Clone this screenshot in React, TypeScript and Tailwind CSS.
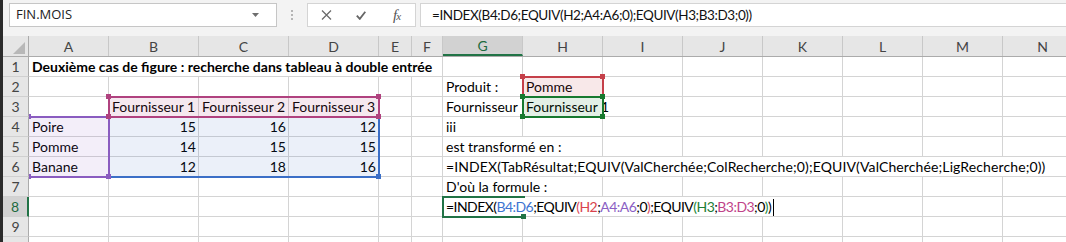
import React from "react";
import clsx from "clsx";

type Cell = { c: number; s?: number; t: React.ReactNode; right?: boolean; bold?: boolean };

const COLS = ["A", "B", "C", "D", "E", "F", "G", "H", "I", "J", "K", "L", "M", "N"];

const SPAN: Record<number, string> = {
  1: "",
  2: "col-span-2",
  5: "col-span-5",
  6: "col-span-6",
  8: "col-span-8",
};

const num = (c: number, t: string): Cell => ({ c, t, right: true });

function Formula() {
  return (
    <span className="tracking-[-0.55px]">
      =INDEX(<span className="text-[#3d74d1]">B4:D6</span>;EQUIV
      <span className="text-[#dc4c5c]">(</span>
      <span className="text-[#d9434d]">H2</span>;<span className="text-[#8b5fc4]">A4:A6</span>;0
      <span className="text-[#dc4c5c]">)</span>;EQUIV
      <span className="text-[#21883b]">(</span>
      <span className="text-[#1e7d34]">H3</span>;<span className="text-[#bf4389]">B3:D3</span>;0
      <span className="text-[#21883b]">)</span>)
      <span className="inline-block w-px h-[17px] bg-black align-[-4px] ml-[2px]" />
    </span>
  );
}

const ROWS: Cell[][] = [
  [{ c: 0, s: 6, t: "Deuxième cas de figure : recherche dans tableau à double entrée", bold: true }],
  [{ c: 6, t: "Produit :" }, { c: 7, t: "Pomme" }],
  [
    { c: 1, t: "Fournisseur 1" },
    { c: 2, t: "Fournisseur 2" },
    { c: 3, t: "Fournisseur 3" },
    { c: 6, t: "Fournisseur 1" },
    { c: 7, s: 2, t: "Fournisseur 1" },
  ],
  [{ c: 0, t: "Poire" }, num(1, "15"), num(2, "16"), num(3, "12"), { c: 6, t: "iii" }],
  [{ c: 0, t: "Pomme" }, num(1, "14"), num(2, "15"), num(3, "15"), { c: 6, s: 2, t: "est transformé en :" }],
  [
    { c: 0, t: "Banane" },
    num(1, "12"),
    num(2, "18"),
    num(3, "16"),
    {
      c: 6,
      s: 8,
      t: (
        <span className="tracking-[0.12px]">
          =INDEX(TabRésultat;EQUIV(ValCherchée;ColRecherche;0);EQUIV(ValCherchée;LigRecherche;0))
        </span>
      ),
    },
  ],
  [{ c: 6, s: 2, t: "D'où la formule :" }],
  [{ c: 6, s: 5, t: <Formula /> }],
  [],
  [],
];

function SheetRow({ cells }: { cells: Cell[] }) {
  const out: React.ReactNode[] = [];
  let i = 0;
  while (i < COLS.length) {
    const cell = cells.find((x) => x.c === i);
    const span = cell?.s ?? 1;
    out.push(
      <div
        key={i}
        className={clsx(
          "h-5 border-r border-b border-[#d4d4d4] leading-[19px] whitespace-nowrap overflow-hidden",
          SPAN[span],
          cell?.right ? "text-right pr-[2px]" : "pl-[3px]",
          cell?.bold && "font-bold"
        )}
      >
        {cell?.t}
      </div>
    );
    i += span;
  }
  return (
    <div className="grid grid-cols-[80px_90px_90px_90px_33px_31px_80px_80px_80px_80px_80px_80px_80px_80px]">
      {out}
    </div>
  );
}

// coloured range outline with its corner handles, drawn over the cells
function RefBox({ className, corners }: { className: string; corners: string[] }) {
  return (
    <div className={clsx("absolute border-2", className)}>
      {corners.map((c) => (
        <span key={c} className={clsx("absolute w-[5px] h-[5px] bg-current", c)} />
      ))}
    </div>
  );
}

const TL = "-left-[4px] -top-[4px]";
const TR = "-right-[3px] -top-[4px]";
const BL = "-left-[4px] -bottom-[3px]";
const BR = "-right-[3px] -bottom-[3px]";

export default function App() {
  return (
    <div className="w-[1066px] h-[242px] overflow-hidden flex bg-white text-[14px] text-black font-['Lato','Liberation_Sans',sans-serif]">
      <div className="w-[3px] shrink-0 bg-[#2b2b2b]" />
      <div className="flex-1 flex flex-col min-w-0">
        {/* name box + formula bar */}
        <div className="h-9 shrink-0 flex items-start pt-[3px] bg-[#f3f3f3]">
          <div className="ml-[6px] w-[268px] h-6 shrink-0 bg-white border border-[#c6c6c6] flex items-center justify-between pl-[6px] pr-[17px] font-['Open_Sans',sans-serif] text-[13px]">
            <span className="text-[#222]">FIN.MOIS</span>
            <svg width="7" height="4" viewBox="0 0 7 4">
              <path d="M0 0h7L3.5 4z" fill="#6e6e6e" />
            </svg>
          </div>
          <div className="w-[30px] h-6 shrink-0 flex flex-col items-center justify-center gap-[2px]">
            <span className="w-[2px] h-[2px] bg-[#b5b5b5]" />
            <span className="w-[2px] h-[2px] bg-[#b5b5b5]" />
            <span className="w-[2px] h-[2px] bg-[#b5b5b5]" />
          </div>
          <div className="w-[109px] h-6 shrink-0 bg-white border border-[#d4d4d4] flex items-center pl-[13px]">
            <svg width="11" height="10" viewBox="0 0 11 10" className="shrink-0">
              <path d="M1 0.5l9 9M10 0.5l-9 9" stroke="#6b6b6b" strokeWidth="1.3" fill="none" />
            </svg>
            <svg width="10" height="9" viewBox="0 0 10 9" className="ml-[24px] shrink-0">
              <path d="M0.8 4.6l3 3.3L9.3 0.8" stroke="#666" strokeWidth="1.8" fill="none" />
            </svg>
            <span className="ml-[27px] font-['Liberation_Serif',serif] italic text-[15px] text-[#555] leading-none tracking-[-1px]">
              f<span className="text-[11px]">x</span>
            </span>
          </div>
          <div className="ml-[4px] flex-1 h-6 bg-white border border-r-0 border-[#d4d4d4] flex items-center pl-[11px] whitespace-nowrap text-[#111] text-[13.5px] tracking-[-0.4px]">
            =INDEX(B4:D6;EQUIV(H2;A4:A6;0);EQUIV(H3;B3:D3;0))
          </div>
        </div>

        {/* column headers */}
        <div className="h-[21px] shrink-0 flex bg-[#e6e6e6] border-b border-[#ababab] text-[#444]">
          <div className="w-[26px] shrink-0 border-r border-[#ababab] flex items-end justify-end pr-[3px] pb-[2px]">
            <svg width="12" height="12" viewBox="0 0 12 12">
              <path d="M12 0V12H0z" fill="#b8b8b8" />
            </svg>
          </div>
          <div className="grid grid-cols-[80px_90px_90px_90px_33px_31px_80px_80px_80px_80px_80px_80px_80px_80px]">
            {COLS.map((k) => (
              <div
                key={k}
                className={clsx(
                  "h-5 border-r border-[#c8c8c8] flex items-center justify-center",
                  k === "G" && "bg-[#d2d2d2] border-b-2 border-b-[#217346] text-[#1d6b3f]"
                )}
              >
                {k}
              </div>
            ))}
          </div>
        </div>

        {/* sheet body */}
        <div className="flex">
          <div className="w-[26px] shrink-0 flex flex-col bg-[#e6e6e6] text-[#444]">
            {ROWS.map((_, r) => (
              <div
                key={r}
                className={clsx(
                  "h-5 shrink-0 border-b border-[#d0d0d0] flex items-center justify-center",
                  r === 7 ? "bg-[#d2d2d2] border-r-2 border-r-[#217346] text-[#1d6b3f]" : "border-r border-r-[#ababab]"
                )}
              >
                {r + 1}
              </div>
            ))}
          </div>
          <div className="relative flex-1 overflow-hidden">
            {ROWS.map((cells, r) => (
              <SheetRow key={r} cells={cells} />
            ))}

            {/* formula references, in Excel's drawing order */}
            <RefBox
              className="left-[79px] top-[59px] w-[272px] h-[62px] border-[#3b6fc7] text-[#3b6fc7] bg-[#3b6fc7]/10"
              corners={[BR]}
            />
            <RefBox
              className="left-[493px] top-[19px] w-[82px] h-[22px] border-[#c5404a] text-[#c5404a] bg-[#c5404a]/12"
              corners={[TL, TR]}
            />
            <RefBox
              className="left-0 top-[59px] w-[81px] h-[62px] border-l-0 border-[#8a5cc0] text-[#8a5cc0] bg-[#8a5cc0]/10"
              corners={["-left-[3px] -top-[4px]", "-left-[3px] -bottom-[3px]", BR]}
            />
            <RefBox
              className="left-[493px] top-[39px] w-[82px] h-[22px] border-[#17792f] text-[#17792f] bg-[#17792f]/12"
              corners={[TL, TR, BL, BR]}
            />
            <RefBox
              className="left-[79px] top-[39px] w-[272px] h-[22px] border-[#b0427f] text-[#b0427f] bg-[#b0427f]/12"
              corners={[TL, TR, BL, BR]}
            />

            {/* active cell G8 with fill handle */}
            <RefBox
              className="left-[413px] top-[139px] w-[83px] h-[22px] border-r-0 border-[#217346] text-[#217346]"
              corners={["-right-[1px] -bottom-[3px]"]}
            />
          </div>
        </div>
      </div>
    </div>
  );
}
